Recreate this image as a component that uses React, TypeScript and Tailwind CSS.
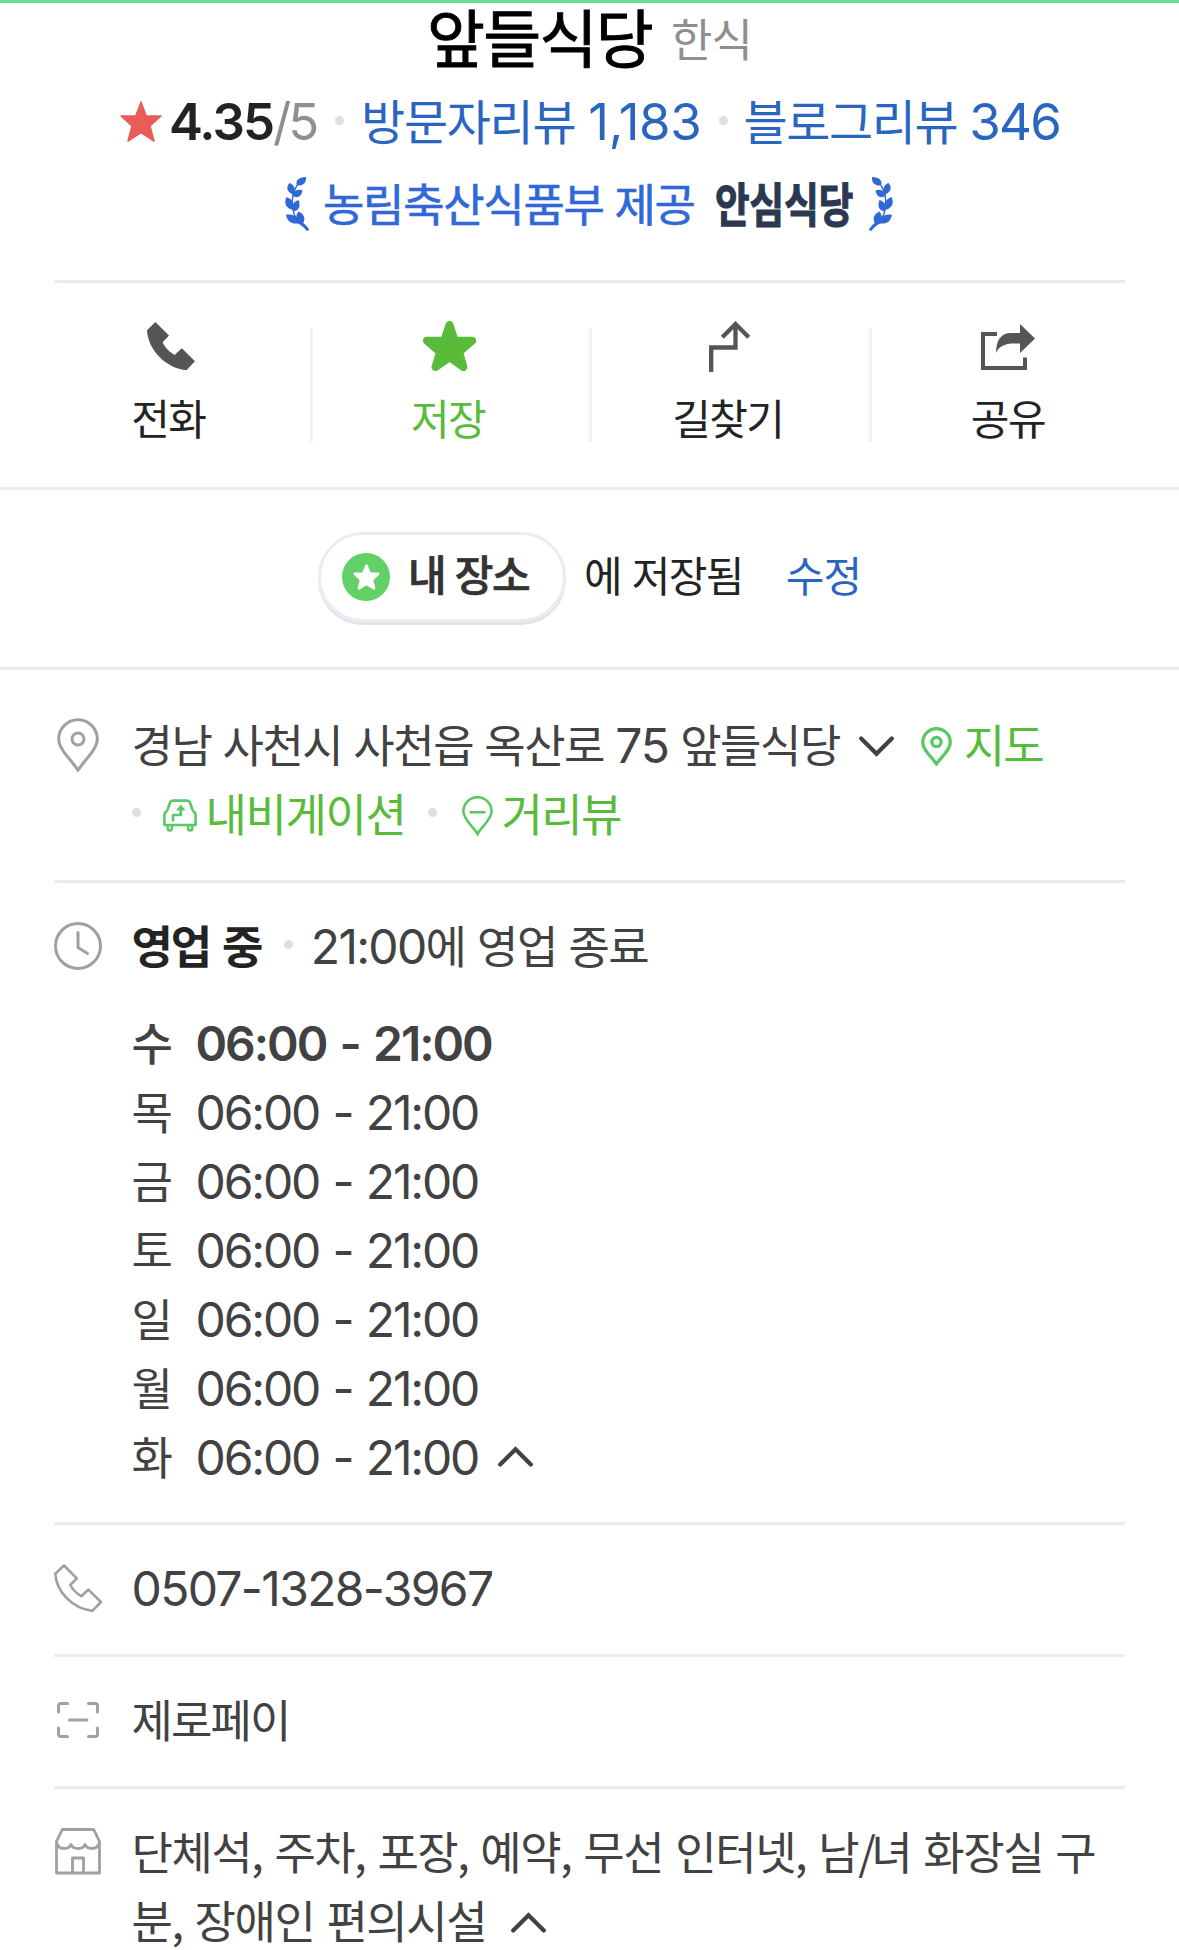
import React from 'react';

const Dot = ({ className = '' }: { className?: string }) => (
  <span className={`inline-block size-[9px] shrink-0 rounded-full bg-[#dfdfdf] ${className}`} />
);

const Num = ({ children, className = '' }: { children: React.ReactNode; className?: string }) => (
  <span className={`font-['Inter',sans-serif] leading-none ${className}`}>{children}</span>
);

function Laurel({ className = '' }: { className?: string }) {
  return (
    <svg viewBox="0 0 24 54" className={`h-[54px] w-6 shrink-0 fill-[#3068d8] ${className}`}>
      <path d="M21 0C14 0 10 3.500 12 8.500C18 9 21.500 6 21 0Z" />
      <path d="M4.500 6C.8 10 1.500 15 8.300 17.500C11.300 12.500 9.500 8 4.500 6Z" />
      <path d="M17.500 13.300C12 11.500 8.500 13.500 7.500 18.500C11.500 22 16.500 20 17.500 13.300Z" />
      <path d="M1.500 20C-1.500 26 1 32 8.500 33C10 26.500 7 22 1.500 20Z" />
      <path d="M13.500 23C8 25 5.500 28.500 8 34.500C14 34 16 29 13.500 23Z" />
      <path d="M1 38C2.500 45 7.500 48 14.500 46C12.500 39 7 36.500 1 38Z" />
      <path d="M13.500 34.500C20 37.500 21 42.500 17 48C11 45.500 9.500 40 13.500 34.500Z" />
      <path d="M12 8L8 17L7 27L9 37L14 45.500L22.500 52.500" fill="none" stroke="#3068d8" strokeWidth="1.400" />
      <path d="M12.500 44.500Q18 46.500 22.300 52.300" fill="none" stroke="#3068d8" strokeWidth="3" strokeLinecap="round" />
    </svg>
  );
}

const SolidPhone = () => (
  <svg viewBox="0 0 48 49" className="h-[49px] w-12 fill-[#555]">
    <path d="M8.400 0L22 13.600L15.500 20.600Q19.500 28.500 27.600 33L34.800 26.300L48 39.300L39.400 48.300C20 46.500 1 29 0 8.300Z" />
  </svg>
);

const SaveStar = () => (
  <svg viewBox="0 0 53 50" className="h-[50px] w-[53px] fill-[#58bb3a]">
    <path
      d="M26.500 4L21.300 19.700L4 19.700L17 31L12.600 46L26.500 36.200L40.400 46L36 31L49 19.700L31.700 19.700Z"
      stroke="#58bb3a"
      strokeWidth="8"
      strokeLinejoin="round"
    />
  </svg>
);

const Route = () => (
  <svg viewBox="0 0 41 52" className="mt-[2px] h-[52px] w-[41px]" fill="none" stroke="#555" strokeWidth="4.300">
    <path d="M2.200 51V26.500H26.500V3M13.300 16.200L26.500 3L39.700 16.200" />
  </svg>
);

const Share = () => (
  <svg viewBox="0 0 54 46" className="mt-[2px] h-[46px] w-[54px]">
    <path d="M16 10H2V44H44V33.500" fill="none" stroke="#555" strokeWidth="4" />
    <path d="M39 0L54 14.500L39 29V19.500H33C24 19.500 18 22 15 29C15 16 20 9 30 9H39Z" fill="#555" />
  </svg>
);

const PinIcon = () => (
  <svg viewBox="0 0 42 54" className="ml-[3px] h-[54px] w-[42px]" fill="none" stroke="#a0a0a0" strokeWidth="3">
    <path d="M21 52.300C15 42.500 1.700 31.500 1.700 21A19.300 19.300 0 0 1 40.300 21C40.300 31.500 27 42.500 21 52.300Z" />
    <ellipse cx="21" cy="21" rx="6" ry="6" />
  </svg>
);

const ClockIcon = () => (
  <svg viewBox="0 0 48 48" className="size-12" fill="none" stroke="#a0a0a0" strokeWidth="3" strokeLinecap="round">
    <circle cx="24" cy="24" r="22.500" />
    <path d="M24 10.500V25.500L33.500 31.500" />
  </svg>
);

const PhoneIcon = () => (
  <svg viewBox="0 0 48 48" className="size-12" fill="none" stroke="#a0a0a0" strokeWidth="2.600" strokeLinejoin="round">
    <path d="M10 1.500L22.800 14.300L16.300 21Q20 28 27.300 32.200L34.300 25.600L47 38L38.300 46.800C19 45 2.500 28 1.300 9.800Z" />
  </svg>
);

const ScanIcon = () => (
  <svg viewBox="0 0 42 36" className="ml-[3px] h-9 w-[42px]" fill="none" stroke="#a0a0a0" strokeWidth="3" strokeLinecap="round">
    <path d="M1.500 10V4Q1.500 1.500 4 1.500H10.500M31.500 1.500H38Q40.500 1.500 40.500 4V10M40.500 26V32Q40.500 34.500 38 34.500H31.500M10.500 34.500H4Q1.500 34.500 1.500 32V26M12.500 18H30" />
  </svg>
);

const StoreIcon = () => (
  <svg viewBox="0 0 46 47" className="ml-[1px] h-[47px] w-[46px]" fill="none" stroke="#a0a0a0" strokeWidth="2.800" strokeLinejoin="round">
    <path d="M1.500 13.500V45H44.500V13.500L38.700 1.500H7.300L1.500 13.500Q2.500 20.500 9 20.500Q14.500 20.500 16 16.500Q17.500 20.500 23 20.500Q28.500 20.500 30 16.500Q31.500 20.500 37 20.500Q43.500 20.500 44.500 13.500M17.500 45V30H28.500V45" />
  </svg>
);

const Chevron = ({ up = false, className = '' }: { up?: boolean; className?: string }) => (
  <svg
    viewBox="0 0 35 21"
    className={`inline-block h-[21px] w-[35px] shrink-0 ${up ? 'rotate-180' : ''} ${className}`}
    fill="none"
    stroke="#424242"
    strokeWidth="4.200"
    strokeLinecap="round"
  >
    <path d="M2.200 2.500L17.500 17.800L32.800 2.500" />
  </svg>
);

const MapPin = () => (
  <svg viewBox="0 0 31 39" className="h-[39px] w-[31px]" fill="none" stroke="#5bc868" strokeWidth="3.300">
    <path d="M15.500 37C12 31 1.700 24 1.700 15.300A13.800 13.800 0 0 1 29.300 15.300C29.300 24 19 31 15.500 37Z" />
    <circle cx="15.500" cy="15" r="4.600" />
  </svg>
);

const StreetPin = () => (
  <svg viewBox="0 0 31 40" className="h-10 w-[31px]" fill="none" stroke="#5bc868" strokeWidth="2.600">
    <path d="M15.500 38C12 31 1.400 24 1.400 15.300A14.100 14.100 0 0 1 29.600 15.300C29.600 24 19 31 15.500 38ZM7.500 16.300H23.500" />
  </svg>
);

const CarIcon = () => (
  <svg viewBox="0 0 34 33" className="h-[33px] w-[34px]" fill="none" stroke="#5bc868" strokeWidth="2.600" strokeLinejoin="round">
    <path d="M1.400 26V16Q1.400 14 3 12.800Q4.300 12 4.800 10L7 3.500Q7.800 1.600 10 1.600H24Q26.200 1.600 27 3.500L29.200 10Q29.700 12 31 12.800Q32.600 14 32.600 16V26ZM4.800 26V29.500Q4.800 31.500 6.800 31.500Q8.800 31.500 8.800 29.500V26M25.200 26V29.500Q25.200 31.500 27.200 31.500Q29.200 31.500 29.200 29.500V26M10 22.500V16H17.800V9" />
    <path d="M13 11.500L17.800 5.500L22.600 11.500Z" fill="#5bc868" strokeWidth="0" />
  </svg>
);

const actions = [
  { label: '전화', icon: <SolidPhone />, text: 'text-[#232323] pr-[6px]', nudge: 'pr-0' },
  { label: '저장', icon: <SaveStar />, text: 'text-[#58bb3a] pr-[6px]', nudge: 'pr-[3px]' },
  { label: '길찾기', icon: <Route />, text: 'text-[#232323] pr-[6px]', nudge: 'pr-[2px]' },
  { label: '공유', icon: <Share />, text: 'text-[#232323] pr-[5px]', nudge: 'pr-1' },
];

const days = ['수', '목', '금', '토', '일', '월', '화'];

function Item({ icon, iconTop, children, className = 'pt-[27px] pb-[33px]' }: {
  icon: React.ReactNode;
  iconTop: string;
  children: React.ReactNode;
  className?: string;
}) {
  return (
    <li className={`flex border-b-[3px] border-[#e9edf1] last:border-0 last:pb-0 ${className}`}>
      <div className={`w-[77.5px] shrink-0 ${iconTop}`}>{icon}</div>
      <div className="min-w-0 flex-1">{children}</div>
    </li>
  );
}

export default function App() {
  return (
    <main className="min-h-[1950px] w-[1179px] bg-white font-['Noto_Sans_CJK_KR',sans-serif] text-[#424242] [&_svg]:block">
      <header className="border-t-[3px] border-[#6ddc92] px-[54px]">
        <h1 className="flex h-[63px] pl-[373px] leading-[63px]">
          <span className="text-[63px] tracking-[-1.73px] text-black [-webkit-text-stroke:0.9px_black]">앞들식당</span>
          <span className="ml-[19px] text-[45px] leading-[70px] tracking-[-0.9px] text-[#8f8f8f]">한식</span>
        </h1>

        <div className="mt-[23px] flex h-[60px] items-baseline whitespace-nowrap pl-[66px] text-[48px] leading-[60px] text-[#2a66bf]">
          <svg viewBox="0 0 42 41" className="h-[41px] w-[42px] shrink-0 translate-y-[2px] fill-[#ea5c57]">
            <path
              d="M21 1L15.800 15L1 15L12 25L8 40L21 31.500L34 40L30 25L41 15L26.200 15Z"
              stroke="#ea5c57"
              strokeWidth="1.500"
              strokeLinejoin="round"
            />
          </svg>
          <Num className="ml-[7px] text-[51px] font-semibold tracking-[-1.94px] text-[#232323]">4.35</Num>
          <Num className="text-[51px] tracking-[-3.2px] text-[#8f8f8f]">/5</Num>
          <Dot className="ml-[19px] -translate-y-[15px]" />
          <span className="ml-[17px] tracking-[-1.3px]">방문자리뷰</span>
          <Num className="ml-[13px] text-[51px] tracking-[-0.33px]">1,183</Num>
          <Dot className="ml-[17px] -translate-y-[15px]" />
          <span className="ml-4 tracking-[-1.4px]">블로그리뷰</span>
          <Num className="ml-3 text-[51px] tracking-[-1.82px]">346</Num>
        </div>

        <div className="mt-[24px] flex h-[60px] whitespace-nowrap pl-[231px] text-[45px] leading-[60px] text-[#3068d8] [-webkit-text-stroke:0.6px_#3068d8]">
          <Laurel className="mt-1" />
          <span className="ml-[14px] tracking-[-1.32px]">농림축산식품부</span>
          <span className="ml-[11px] tracking-[-1.4px]">제공</span>
          <span className="ml-5 w-[138px]">
            <span className="inline-block origin-left scale-x-[0.8] text-[47px] font-bold leading-[55px] text-[#2b3950] [-webkit-text-stroke:1.2px_#2b3950]">
              안심식당
            </span>
          </span>
          <Laurel className="ml-4 mt-1 -scale-x-100" />
        </div>
      </header>

      <nav className="mx-[54px] mt-[47px] border-t-[3px] border-[#e9edf1]">
        <ul className="-ml-[21px] -mr-[27px] flex h-[204px] pt-[37px]">
          {actions.map((a) => (
            <li key={a.label} className="group flex w-[279.7px] shrink-0">
              <a className="flex flex-1 flex-col items-center">
                <span className={`flex h-[52px] items-center ${a.nudge}`}>{a.icon}</span>
                <span className={`mt-[18px] text-[42px] leading-[54px] tracking-[-1.6px] ${a.text}`}>{a.label}</span>
              </a>
              <span className="mt-2 h-[114px] w-[3px] bg-[#f1f1f3] group-last:bg-transparent" />
            </li>
          ))}
        </ul>
      </nav>

      <section className="flex h-[183px] items-start border-y-[3px] border-[#e9edf1] pl-[318px] pt-[42px] text-[42px] leading-[83px] text-[#232323]">
        <div className="flex h-[90px] w-[248px] rounded-[45px] border-[3px] border-[#e9edf1] pl-[21px] text-[#333] shadow-[0_3px_0_#e1e3e8]">
          <span className="mt-[18px] flex size-12 items-center justify-center rounded-full bg-[#60d067]">
            <svg viewBox="0 0 42 41" className="h-[26px] w-[27px] fill-white">
              <path
                d="M21 2.500L15.800 15.500L2.500 15.500L12.500 25L9 38.500L21 31.500L33 38.500L29.500 25L39.500 15.500L26.200 15.500Z"
                stroke="white"
                strokeWidth="4"
                strokeLinejoin="round"
              />
            </svg>
          </span>
          <span className="ml-[18px] font-medium leading-[76px] [-webkit-text-stroke:0.7px_#333]">내</span>
          <span className="ml-[8px] font-medium leading-[76px] tracking-[-1.2px] [-webkit-text-stroke:0.7px_#333]">장소</span>
        </div>
        <span className="ml-[18px]">에</span>
        <span className="ml-[9px] tracking-[-1.6px]">저장됨</span>
        <a className="ml-[43px] tracking-[-0.9px] text-[#2a66bf]">수정</a>
      </section>

      <ul className="px-[54px] text-[45px] leading-[69px] tracking-[-1.5px]">
        <Item icon={<PinIcon />} iconTop="mt-[9px]" className="pb-[33px] pt-[39px]">
          <div className="flex h-[69px] whitespace-nowrap">
            <span className="[word-spacing:2.6px]">
              경남 사천시 사천읍 옥산로 <Num className="text-[48px] tracking-[-1px]">75</Num> 앞들식당
            </span>
            <Chevron className="ml-[19px] mt-[27px]" />
            <a className="ml-[27px] flex text-[#58bb3a]">
              <span className="mt-[18px]"><MapPin /></span>
              <span className="ml-[12px] tracking-[-2px]">지도</span>
            </a>
          </div>
          <div className="flex h-[69px] whitespace-nowrap text-[#58bb3a]">
            <Dot className="mt-[30px]" />
            <a className="ml-[22px] flex">
              <span className="mt-[21px]"><CarIcon /></span>
              <span className="ml-[9px] tracking-[-1.4px]">내비게이션</span>
            </a>
            <Dot className="ml-[22px] mt-[30px]" />
            <a className="ml-[25px] flex">
              <span className="mt-[18px]"><StreetPin /></span>
              <span className="ml-[9px] tracking-[-1.7px]">거리뷰</span>
            </a>
          </div>
        </Item>

        <Item icon={<ClockIcon />} iconTop="mt-[12px]" className="pb-8 pt-[27px]">
          <div className="flex h-[69px] whitespace-nowrap">
            <span className="font-bold tracking-[-2.2px] text-[#232323]">영업</span>
            <span className="ml-[12px] font-bold text-[#232323]">중</span>
            <Dot className="ml-[22px] mt-[30px]" />
            <span className="ml-[18px] [word-spacing:3px]">
              <Num className="text-[48px] tracking-[-1.7px]">21:00</Num>에 영업 종료
            </span>
          </div>
          <ul className="mt-[28px]">
            {days.map((d, i) => (
              <li key={d} className="flex h-[69px] items-baseline whitespace-nowrap">
                <span className={`w-[64px] ${i === 0 ? 'font-medium' : ''}`}>{d}</span>
                {i === 0 ? (
                  <Num className="text-[48px] font-semibold tracking-[-2.05px] [word-spacing:3.2px]">06:00 - 21:00</Num>
                ) : (
                  <Num className="text-[48px] tracking-[-2.15px] [word-spacing:2px]">06:00 - 21:00</Num>
                )}
                {i === days.length - 1 && <Chevron up className="ml-[20px] -translate-y-[8px]" />}
              </li>
            ))}
          </ul>
        </Item>

        <Item icon={<PhoneIcon />} iconTop="mt-[12px]">
          <span className="block h-[69px]">
            <Num className="text-[48px] tracking-[-1.65px]">0507-1328-3967</Num>
          </span>
        </Item>

        <Item icon={<ScanIcon />} iconTop="mt-[18px]">
          <span className="block h-[69px] tracking-[-1.9px]">제로페이</span>
        </Item>

        <Item icon={<StoreIcon />} iconTop="mt-[12px]">
          <div className="h-[69px] whitespace-nowrap [word-spacing:3.6px]">
            단체석, 주차, 포장, 예약, 무선 인터넷, 남<span className="tracking-[-4.500px]">/</span>녀 화장실 구
          </div>
          <div className="flex h-[65px] whitespace-nowrap">
            <span className="[word-spacing:3.6px]">분, 장애인 편의시설</span>
            <Chevron up className="ml-[25px] mt-[27px]" />
          </div>
        </Item>
      </ul>
    </main>
  );
}
